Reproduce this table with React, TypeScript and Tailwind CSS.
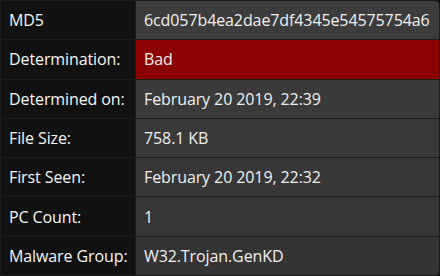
const ROWS = [
  { label: "MD5", value: "6cd057b4ea2dae7df4345e54575754a6", bg: "bg-[#3c3c3c]" },
  { label: "Determination:", value: "Bad", bg: "bg-[#8b0000]" },
  { label: "Determined on:", value: "February 20 2019, 22:39", bg: "bg-[#3a3a3a]" },
  { label: "File Size:", value: "758.1 KB", bg: "bg-[#393939]" },
  { label: "First Seen:", value: "February 20 2019, 22:32", bg: "bg-[#373737]" },
  { label: "PC Count:", value: "1", bg: "bg-[#363636]" },
  { label: "Malware Group:", value: "W32.Trojan.GenKD", bg: "bg-[#343434]" },
];

export default function App() {
  return (
    <div className="h-[276px] w-[440px] bg-[#111111] font-['Open_Sans',sans-serif] text-[16px] tracking-[-0.1px]">
      <div className="flex h-full flex-col overflow-hidden rounded-r-[5px] border border-[#1c1c1c]">
        {ROWS.map((r, i) => (
          <div
            key={r.label}
            className={`flex flex-1 items-center ${i > 0 ? "border-t border-[#1c1c1c]" : ""}`}
          >
            <div className="flex h-full w-[134px] items-center bg-[#111111] pl-2 text-[#f5f5f5]">
              {r.label}
            </div>
            <div className={`flex h-full flex-1 items-center border-l border-[#1c1c1c] pl-2 text-[#f0f0f0] ${r.bg}`}>
              {r.value}
            </div>
          </div>
        ))}
      </div>
    </div>
  );
}
